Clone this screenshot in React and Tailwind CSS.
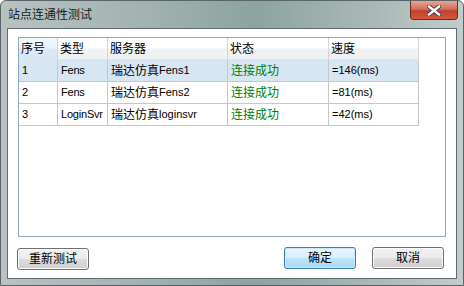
import React from 'react';

const rows = [
  { id: '1', type: 'Fens', cn: '瑞达仿真', en: 'Fens1', status: '连接成功', speed: '=146(ms)', selected: true },
  { id: '2', type: 'Fens', cn: '瑞达仿真', en: 'Fens2', status: '连接成功', speed: '=81(ms)' },
  { id: '3', type: 'LoginSvr', cn: '瑞达仿真', en: 'loginsvr', status: '连接成功', speed: '=42(ms)' },
];

const cols = ['w-[39px]', 'w-[50px]', 'w-[120px]', 'w-[101px]', 'w-[90px]'];

function Button({ children, primary }) {
  return (
    <button
      className={`h-[22px] w-[72px] rounded-[3px] border text-[12px] text-black ${
        primary
          ? 'border-[#3c7fb1] bg-[linear-gradient(#eaf6fd_0%,#d9f0fc_50%,#bee6fd_50%,#a7d9f5_100%)] shadow-[inset_0_0_0_1px_#c8e8fb]'
          : 'border-[#707070] bg-[linear-gradient(#f2f2f2_0%,#ebebeb_50%,#dddddd_50%,#cfcfcf_100%)] shadow-[inset_0_0_0_1px_#fcfcfc]'
      }`}
    >
      {children}
    </button>
  );
}

export default function App() {
  return (
    <div
      className="relative flex h-[286px] w-[464px] flex-col overflow-hidden rounded-t-[6px] border border-[#5a6368] bg-[linear-gradient(90deg,#b8c2c1_0%,#a3b3b1_30%,#8ca3a0_55%,#a9b8b5_80%,#c2ccca_100%)]"
      style={{ fontFamily: '"Liberation Sans", "Noto Sans CJK SC", sans-serif' }}
    >
      <div className="flex h-[27px] shrink-0 items-center pl-[7px] text-[12px] text-[#1a1a2a]">
        站点连通性测试
      </div>

      <div className="absolute left-[409px] top-0 flex h-[19px] w-[48px] items-center justify-center rounded-b-[4px] border border-t-0 border-[#6b2a22] bg-[linear-gradient(#e8a493_0%,#d0705c_45%,#c1402a_55%,#d4593e_100%)]">
        <svg width="14" height="11" viewBox="0 0 14 11">
          <path d="M2 1.5 L12 9.5 M12 1.5 L2 9.5" stroke="#3a3a48" strokeWidth="4.2" strokeLinecap="square" />
          <path d="M2 1.5 L12 9.5 M12 1.5 L2 9.5" stroke="#ffffff" strokeWidth="2.4" strokeLinecap="square" />
        </svg>
      </div>

      <div className="mx-[6px] mb-[7px] flex flex-1 flex-col border border-[#5f6b70]">
        <div className="flex flex-1 flex-col bg-white pl-[10px] pr-[8px] pt-[8px] pb-[8px]">
          <div className="h-[200px] w-[428px] border border-[#8ea9c6] bg-white text-[12px] text-black">
            <div className="flex h-[22px] w-[400px] border-b border-[#e2e3e5] bg-[linear-gradient(#ffffff_0%,#ffffff_45%,#f1f2f4_55%,#eef0f2_100%)]">
              {['序号', '类型', '服务器', '状态', '速度'].map((h, i) => (
                <div
                  key={h}
                  className={`${cols[i]} flex items-center border-r border-[#d5d5d5] pl-[2px] ${
                    i === 0 ? 'bg-[linear-gradient(#f2f8fd_0%,#eaf3fb_45%,#dde9f5_55%,#d9e6f3_100%)]' : ''
                  }`}
                >
                  {h}
                </div>
              ))}
            </div>
            {rows.map((r) => (
              <div
                key={r.id}
                className={`flex h-[22px] w-[400px] border-b border-[#c6c6cc] ${r.selected ? 'bg-[#d8e5f2]' : 'bg-white'}`}
              >
                <div className={`${cols[0]} flex items-center border-r border-[#c6c6cc] pl-[3px] text-[11px]`}>{r.id}</div>
                <div className={`${cols[1]} flex items-center border-r border-[#c6c6cc] pl-[3px] text-[11px] tracking-[-0.2px]`}>{r.type}</div>
                <div className={`${cols[2]} flex items-center border-r border-[#c6c6cc] pl-[3px]`}>
                  {r.cn}
                  <span className="text-[11px]">{r.en}</span>
                </div>
                <div className={`${cols[3]} flex items-center border-r border-[#c6c6cc] pl-[3px] text-[#008000]`}>{r.status}</div>
                <div className={`${cols[4]} flex items-center border-r border-[#c6c6cc] pl-[3px] text-[11px]`}>{r.speed}</div>
              </div>
            ))}
          </div>

          <div className="mt-[9px] flex items-center">
            <div className="-ml-[1px]">
              <Button>重新测试</Button>
            </div>
            <div className="ml-auto flex gap-[16px] pr-[4px]">
              <Button primary>确定</Button>
              <Button>取消</Button>
            </div>
          </div>
        </div>
      </div>
    </div>
  );
}
